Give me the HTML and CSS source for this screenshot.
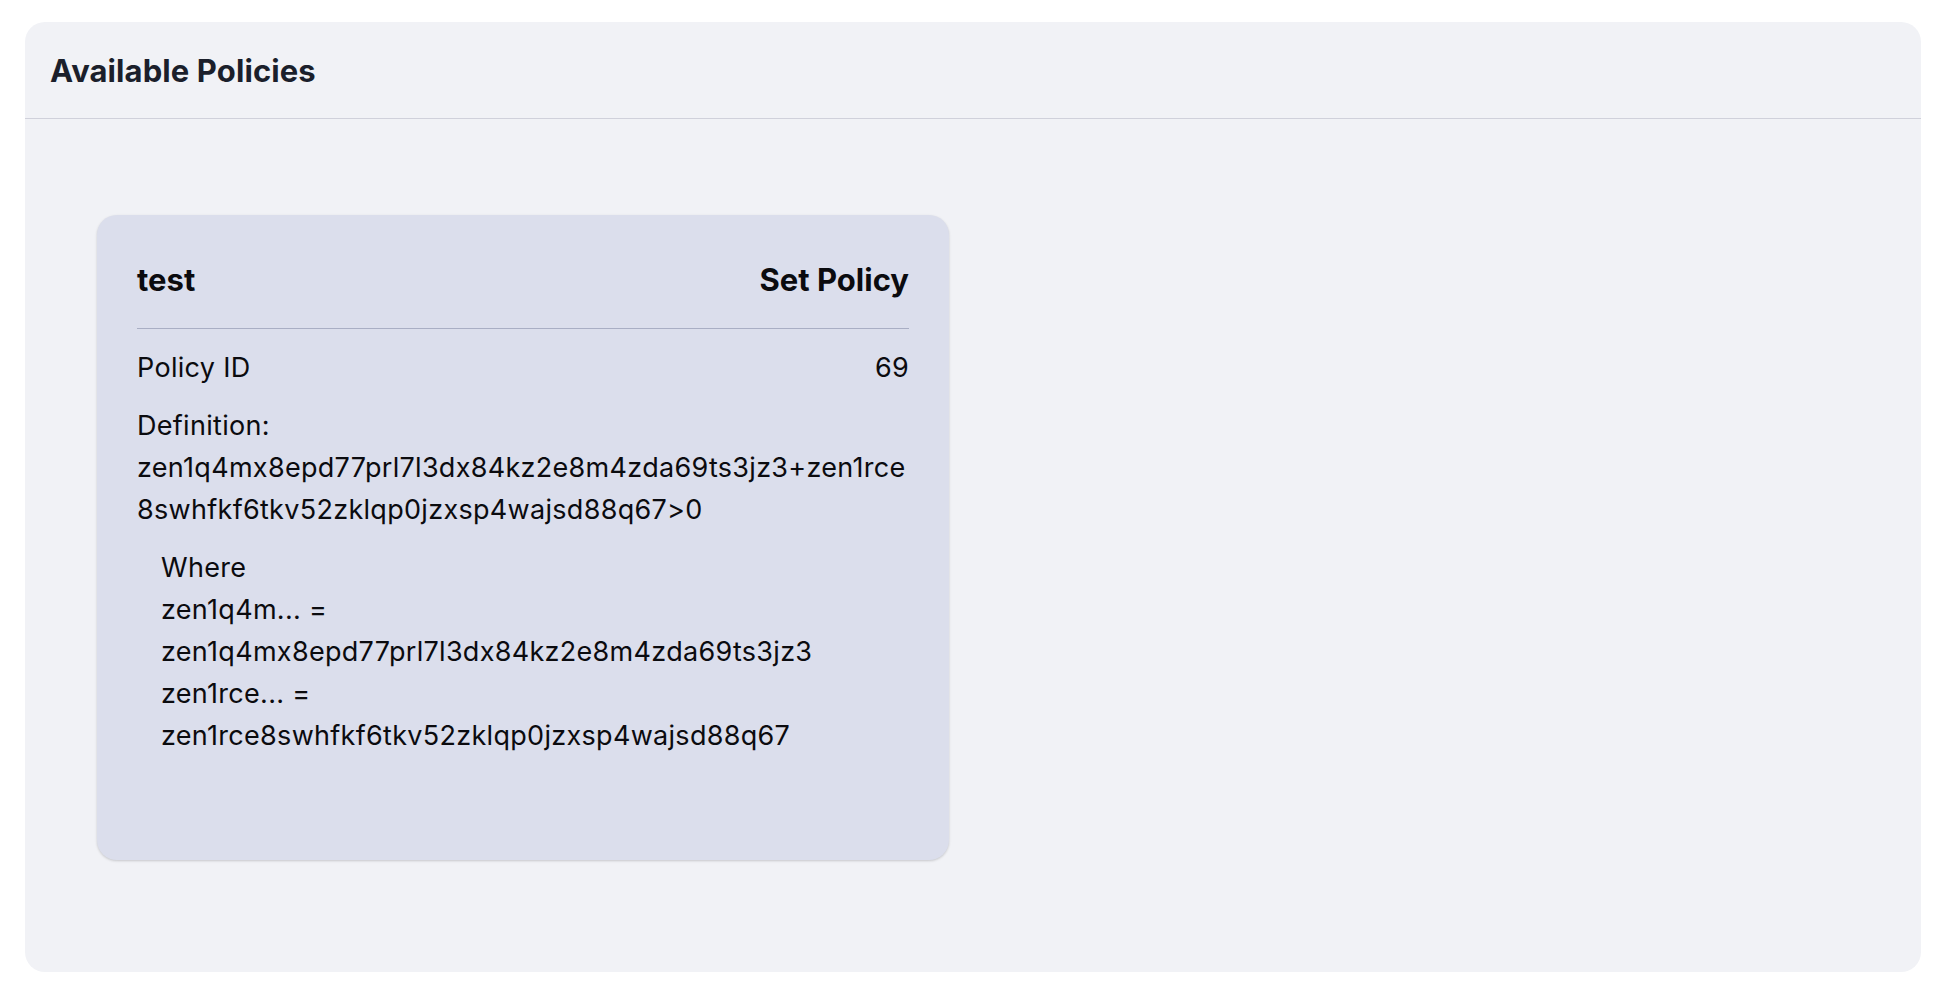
FILE: index.html
```html
<!DOCTYPE html>
<html lang="en">
<head>
<meta charset="utf-8">
<title>Available Policies</title>
<link rel="stylesheet" href="styles.css">
</head>
<body>
<section class="panel">
  <header class="panel-header">
    <h2 class="panel-title">Available Policies</h2>
  </header>
  <div class="panel-body">
    <article class="policy-card">
      <div class="card-head">
        <h3 class="card-name">test</h3>
        <button class="set-btn" type="button">Set Policy</button>
      </div>
      <div class="card-row">
        <span>Policy ID</span>
        <span>69</span>
      </div>
      <div class="definition">
        <div>Definition:</div>
        <div class="def-expr">zen1q4mx8epd77prl7l3dx84kz2e8m4zda69ts3jz3+zen1rce8swhfkf6tkv52zklqp0jzxsp4wajsd88q67&gt;0</div>
      </div>
      <div class="where">
        <div>Where</div>
        <div>zen1q4m... =</div>
        <div>zen1q4mx8epd77prl7l3dx84kz2e8m4zda69ts3jz3</div>
        <div>zen1rce... =</div>
        <div>zen1rce8swhfkf6tkv52zklqp0jzxsp4wajsd88q67</div>
      </div>
    </article>
  </div>
</section>
</body>
</html>
```
FILE: styles.css
```css
* { box-sizing: border-box; }
html, body { margin: 0; background: #ffffff; }
body {
  padding: 22px 39px 24px 25px;
  font-family: Inter, "Noto Sans", "Liberation Sans", sans-serif;
  height: 996px;
}
.panel {
  height: 950px;
  background: #f1f2f6;
  border-radius: 20px;
  display: flex;
  flex-direction: column;
}
.panel-header {
  height: 97px;
  display: flex;
  align-items: center;
  padding: 0 25px;
  border-bottom: 1.5px solid #d0d1db;
}
.panel-title {
  margin: 0;
  font-size: 31px;
  font-weight: 700;
  color: #1b1f2b;
  letter-spacing: 0.1px;
}
.panel-body {
  padding: 96px 72px 0 72px;
}
.policy-card {
  width: 852px;
  height: 645px;
  background: #dbdeec;
  border-radius: 20px;
  box-shadow: 0 1px 3px rgba(0, 0, 0, 0.12), 0 1px 2px rgba(0, 0, 0, 0.06);
  padding: 44px 40px 0 40px;
  color: #0b0b0f;
  font-size: 27px;
  line-height: 42px;
  letter-spacing: 0.3px;
}
.card-head {
  display: flex;
  justify-content: space-between;
  align-items: center;
  padding-bottom: 27px;
  border-bottom: 1.5px solid #a9aec4;
  letter-spacing: 0;
}
.card-name {
  margin: 0;
  font-size: 31px;
  line-height: 42px;
  font-weight: 700;
}
.set-btn {
  font: inherit;
  font-size: 31px;
  line-height: 42px;
  font-weight: 700;
  color: inherit;
  background: none;
  border: 0;
  padding: 0;
  cursor: pointer;
}
.card-row {
  display: flex;
  justify-content: space-between;
  margin-top: 18px;
}
.definition {
  margin-top: 16px;
}
.def-expr {
  word-break: break-all;
}
.where {
  margin-top: 16px;
  padding-left: 24px;
  word-break: break-all;
}
```
